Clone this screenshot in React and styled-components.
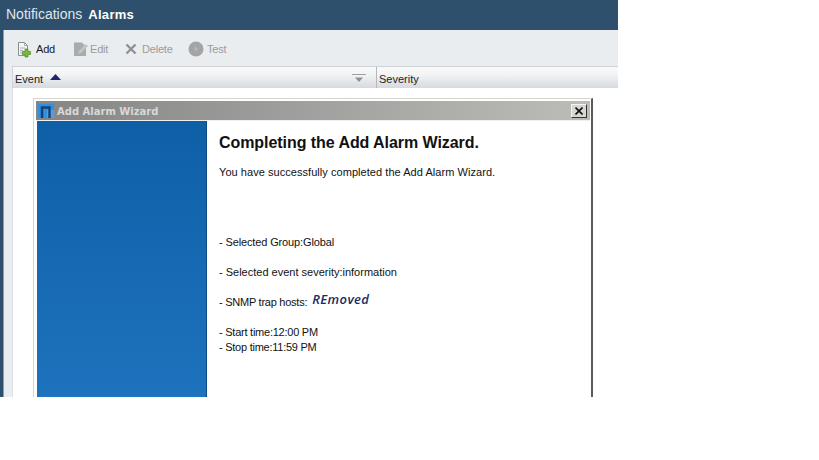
import React from "react";
import styled, { createGlobalStyle } from "styled-components";

const GlobalStyle = createGlobalStyle`
  html, body {
    margin: 0;
    padding: 0;
    background: #fff;
    font-family: "Liberation Sans", Arial, sans-serif;
  }
`;

const Screen = styled.div`
  position: relative;
  width: 618px;
  height: 397px;
  overflow: hidden;
  background: #fff;
`;

const TopBar = styled.div`
  height: 30px;
  background: #2f506c;
  display: flex;
  align-items: center;
  gap: 6px;
  padding: 0 0 2px 6px;
  box-sizing: border-box;
`;

const Crumb = styled.span`
  font-weight: ${props => (props.$current ? "bold" : "normal")};
  color: ${props => (props.$current ? "#fff" : "#dfe6ec")};
  font-size: ${props => (props.$current ? "13px" : "14px")};
  letter-spacing: ${props => (props.$current ? "0.3px" : "0")};
`;

const Body = styled.div`
  display: flex;
  height: 367px;
`;

const SideEdge = styled.div`
  width: 4px;
  background: #2f506c;
  border-right: 1px solid #8b9cab;
  box-sizing: border-box;
`;

const Content = styled.div`
  flex: 1;
  background: #e9edf0;
  padding-left: 8px;
  display: flex;
  flex-direction: column;
`;

const Toolbar = styled.div`
  height: 37px;
  display: flex;
  align-items: center;
  padding: 2px 0 0 5px;
  box-sizing: border-box;
  border-bottom: 1px solid #cfd3d7;
`;

const ToolButton = styled.div`
  display: flex;
  align-items: center;
  gap: ${props => props.$gap ?? 3}px;
  width: ${props => props.$width}px;
  font-size: 11px;
  letter-spacing: -0.2px;
  color: ${props => (props.$disabled ? "#9a9c9e" : "#1a1a1a")};

  svg {
    display: block;
  }
`;

const TableHead = styled.div`
  display: flex;
  height: 21px;
  background: linear-gradient(#fafafa, #f3f4f5 35%, #d6dade);
  border-left: 1px solid #cfd3d7;
  font-size: 11px;
  color: #222;
`;

const HeadCell = styled.div`
  display: flex;
  align-items: center;
  width: ${props => props.$width || "auto"};
  flex: ${props => (props.$width ? "none" : 1)};
  box-sizing: border-box;
  padding: 2px 0 0 2px;
  border-right: ${props => (props.$width ? "1px solid #b4b8bc" : "none")};
`;

const SortArrow = styled.svg`
  margin: 0 0 4px 7px;
`;

const FilterIcon = styled.svg`
  margin-left: auto;
  margin-right: 10px;
`;

const TableBody = styled.div`
  flex: 1;
  background: #fff;
  border-left: 1px solid #dfe2e5;
`;

const Dialog = styled.div`
  position: absolute;
  left: 33px;
  top: 98px;
  width: 560px;
  height: 320px;
  box-sizing: border-box;
  background: #fff;
  border: 1px solid #d8d4cc;
  border-right: 2px solid #5a5a5a;
  padding: 2px 1px 0 2px;
  display: flex;
  flex-direction: column;
`;

const DialogTitle = styled.div`
  height: 20px;
  flex: none;
  display: flex;
  align-items: center;
  gap: 3px;
  padding: 1px 3px 0 2px;
  background: linear-gradient(90deg, #858585, #bcbcb8);
  border-bottom: 1px solid #f0f0f0;
  box-sizing: border-box;
  color: #d8d8d8;
  font-family: "DejaVu Sans", Verdana, sans-serif;
  font-weight: bold;
  font-size: 10px;
`;

const CloseButton = styled.div`
  margin-left: auto;
  width: 16px;
  height: 14px;
  background: #d8d6d0;
  border: 1px solid;
  border-color: #f4f4f4 #333 #333 #f4f4f4;
  box-sizing: border-box;
  display: flex;
  align-items: center;
  justify-content: center;
`;

const DialogBody = styled.div`
  flex: 1;
  display: flex;
`;

const SidePanel = styled.div`
  width: 170px;
  flex: none;
  margin-left: 1px;
  background: linear-gradient(#0e5fa6, #1f74bf);
  border-right: 1px solid #0c4a82;
  box-sizing: border-box;
`;

const Main = styled.div`
  flex: 1;
  padding: 12px 0 0 12px;
  font-size: 11px;
  color: #111;
`;

const Heading = styled.h1`
  margin: 0;
  font-size: 16px;
  line-height: 20px;
  font-weight: bold;
  letter-spacing: -0.06px;
  color: #111;
`;

const Intro = styled.p`
  margin: 13px 0 0;
  line-height: 13px;
  letter-spacing: 0.05px;
`;

const Facts = styled.div`
  margin-top: 57px;
`;

const Fact = styled.div`
  line-height: 13px;
  margin-bottom: ${props => props.$gap ?? 17}px;
  letter-spacing: ${props => props.$spacing ?? 0}px;
  display: flex;
  align-items: flex-end;
`;

const Scribble = styled.span`
  margin-left: 5px;
  position: relative;
  top: -3px;
  font-family: "Open Sans", "Liberation Sans", sans-serif;
  font-style: italic;
  font-weight: 600;
  font-size: 13px;
  letter-spacing: 0.4px;
  color: #1a2c66;
`;

const AddIcon = () => (
  <svg width="16" height="17" viewBox="0 0 16 17">
    <path d="M1.500 1.500h6l3 3v10h-9z" fill="#f4f6f4" stroke="#8a8f90" />
    <path d="M7.500 1.500v3h3M3 7h5M3 9.500h3M3 12h3" fill="none" stroke="#a5abac" />
    <path d="M8 8h3v2.500h2.500v3H11V16H8v-2.500H5.500v-3H8z" fill="#7cb83c" stroke="#4f8a22" strokeWidth=".7" />
  </svg>
);

const EditIcon = () => (
  <svg width="16" height="16" viewBox="0 0 16 16">
    <path d="M1 1.500h8l4 4V15H1z" fill="#a9abad" />
    <path d="M6 10l7-7 2 2-7 7-3 1z" fill="#c2c4c6" />
  </svg>
);

const DeleteIcon = () => (
  <svg width="12" height="12" viewBox="0 0 12 12">
    <path d="M1.500 1.500l9 9M10.500 1.500l-9 9" stroke="#8f9193" strokeWidth="2.400" />
  </svg>
);

const TestIcon = () => (
  <svg width="16" height="16" viewBox="0 0 16 16">
    <circle cx="8" cy="8" r="7.500" fill="#a2a4a6" />
    <path d="M6.500 5l4 3-4 3z" fill="#b4b6b8" />
  </svg>
);

const WizardLogo = () => (
  <svg width="16" height="14" viewBox="0 0 16 14">
    <rect width="16" height="14" fill="#2f8fe0" />
    <rect x="9" y="6" width="7" height="8" fill="#4f9fe6" />
    <path d="M4 14V3.500h7.500V14" fill="none" stroke="#17416f" strokeWidth="2.400" />
  </svg>
);

export default function App() {
  return (
    <>
      <GlobalStyle />
      <Screen>
        <TopBar>
          <Crumb>Notifications</Crumb>
          <Crumb $current>Alarms</Crumb>
        </TopBar>
        <Body>
          <SideEdge />
          <Content>
            <Toolbar>
              <ToolButton $width={56}><AddIcon />Add</ToolButton>
              <ToolButton $disabled $width={52} $gap={1}><EditIcon />Edit</ToolButton>
              <ToolButton $disabled $width={63} $gap={5}><DeleteIcon />Delete</ToolButton>
              <ToolButton $disabled><TestIcon />Test</ToolButton>
            </Toolbar>
            <TableHead>
              <HeadCell $width="364px">
                Event
                <SortArrow width="11" height="6" viewBox="0 0 11 6">
                  <path d="M5.500 0L11 6H0z" fill="#23246e" />
                </SortArrow>
                <FilterIcon width="14" height="10" viewBox="0 0 14 10">
                  <path d="M0 .5h14" stroke="#9aa0a6" />
                  <path d="M3 3.500h8L7 8z" fill="#8b9198" />
                </FilterIcon>
              </HeadCell>
              <HeadCell>Severity</HeadCell>
            </TableHead>
            <TableBody />
          </Content>
        </Body>
        <Dialog>
          <DialogTitle>
            <WizardLogo />
            Add Alarm Wizard
            <CloseButton>
              <svg width="8" height="8" viewBox="0 0 8 8">
                <path d="M.5.500l7 7M7.500.500l-7 7" stroke="#111" strokeWidth="1.600" />
              </svg>
            </CloseButton>
          </DialogTitle>
          <DialogBody>
            <SidePanel />
            <Main>
              <Heading>Completing the Add Alarm Wizard.</Heading>
              <Intro>You have successfully completed the Add Alarm Wizard.</Intro>
              <Facts>
                <Fact $spacing={-0.13}>- Selected Group:Global</Fact>
                <Fact>- Selected event severity:information</Fact>
                <Fact $spacing={-0.25}>- SNMP trap hosts: <Scribble>REmoved</Scribble></Fact>
                <Fact $gap={2} $spacing={-0.24}>- Start time:12:00 PM</Fact>
                <Fact $spacing={-0.25}>- Stop time:11:59 PM</Fact>
              </Facts>
            </Main>
          </DialogBody>
        </Dialog>
      </Screen>
    </>
  );
}
